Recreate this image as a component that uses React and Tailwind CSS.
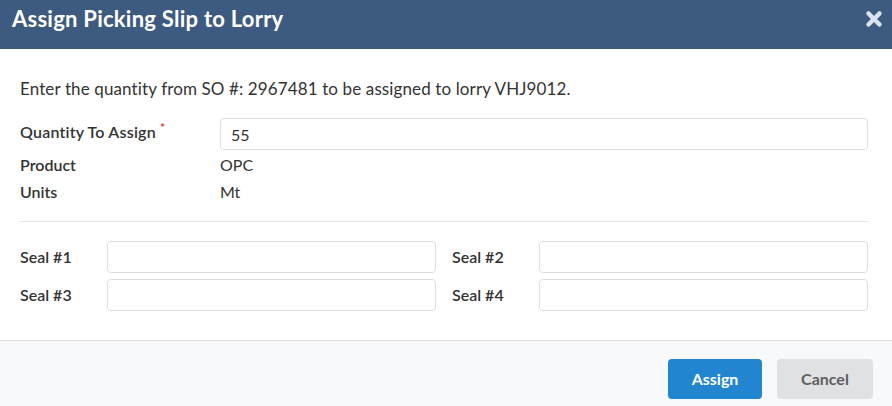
export default function App() {
  const seals = [
    ["Seal #1", "Seal #2"],
    ["Seal #3", "Seal #4"],
  ];

  return (
    <div className="w-[892px] h-[406px] bg-white flex flex-col text-[#333333]" style={{ fontFamily: "Lato, 'Open Sans', sans-serif" }}>
      {/* header */}
      <div className="h-[49px] bg-[#3d5a80] flex items-start justify-between pl-3 pr-[9px] shrink-0">
        <h1 className="text-white text-[22px] font-bold tracking-[0.25px] leading-none mt-[8px]">
          Assign Picking Slip to Lorry
        </h1>
        <svg width="18" height="18" viewBox="0 0 18 18" className="mt-[10px]">
          <path d="M3.5 3.5 L14.5 14.5 M14.5 3.5 L3.5 14.5" stroke="#dce3ec" strokeWidth="4.5" strokeLinecap="round" />
        </svg>
      </div>

      {/* body */}
      <div className="flex-1 pl-5 pr-6 pt-[30px]">
        <p className="text-[17px] leading-5 tracking-[0.12px]">
          Enter the quantity from SO #: 2967481 to be assigned to lorry VHJ9012.
        </p>

        <div className="mt-[19px] flex items-start">
          <div className="w-[200px] text-[16px] font-semibold pt-[4px] leading-5 tracking-[0.2px]">
            Quantity To Assign <span className="text-[#db2828] relative -top-[6px] text-[12px]">*</span>
          </div>
          <input
            defaultValue="55"
            className="flex-1 h-[32px] border border-[#dededf] rounded-[4px] px-[10px] text-[16px] outline-none"
          />
        </div>
        <div className="flex text-[16px] mt-[5px] leading-[20px]">
          <div className="w-[200px] font-semibold">Product</div>
          <div>OPC</div>
        </div>
        <div className="flex text-[16px] mt-[7px] leading-[20px]">
          <div className="w-[200px] font-semibold">Units</div>
          <div>Mt</div>
        </div>

        <div className="border-t border-[#e2e2e3] mt-[19px]" />

        <div className="mt-[19px] flex flex-col gap-[6px]">
          {seals.map((row) => (
            <div key={row[0]} className="flex items-center gap-[16px]">
              {row.map((label) => (
                <div key={label} className="flex items-center flex-1">
                  <div className="w-[87px] text-[16px] font-semibold">{label}</div>
                  <input className="flex-1 h-[32px] border border-[#dededf] rounded-[4px] px-[10px] text-[16px] outline-none" />
                </div>
              ))}
            </div>
          ))}
        </div>
      </div>

      {/* footer */}
      <div className="h-[66px] border-t border-[#dcdde0] bg-[#f8f9fb] flex items-start justify-end gap-[15px] pr-[19px] pt-[18px] shrink-0">
        <button className="w-[94px] h-[40px] rounded-[4px] bg-[#2185d0] text-white text-[16px] font-bold">
          Assign
        </button>
        <button className="w-[96px] h-[40px] rounded-[4px] bg-[#e0e1e2] text-[#5f5f5f] text-[16px] font-bold">
          Cancel
        </button>
      </div>
    </div>
  );
}
